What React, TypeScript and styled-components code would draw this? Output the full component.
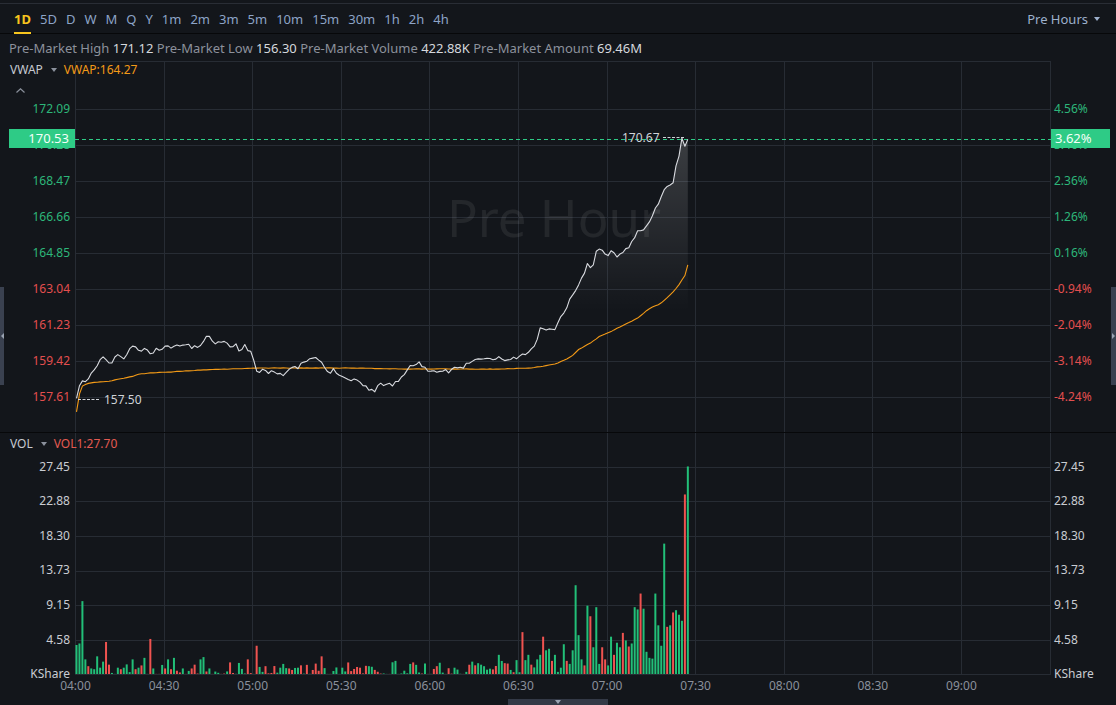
import React from "react";
import styled, { createGlobalStyle } from "styled-components";

const FONT = `"Noto Sans", "Liberation Sans", Arial, sans-serif`;

const colors = {
    bg: "#13161b",
    grid: "#272c34",
    divider: "#07080a",
    green: "#2db67a",
    red: "#e34f4f",
    barGreen: "#22bf78",
    barRed: "#ef5350",
    tag: "#2ecb86",
    tab: "#8da4c7",
    active: "#f7c51e",
    muted: "#8c919b",
    text: "#d5d8dd",
    axis: "#c9ccd2",
    time: "#8a909b",
    orange: "#f39a17",
    line: "#d9dbe0",
};

// chart geometry (page coords)
const X0 = 75;
const PY0 = 61;
const PLOT_W = 976;
const PRICE_H = 371;
const VOL_H = 242;
const SLOT = 88.6;
const PX_PER_MIN = SLOT / 30;
const MINUTES = 208;
const VOL_ZERO = 241.5;
const VOL_SCALE = 7.565;

const GlobalStyle = createGlobalStyle`
    html, body { margin: 0; padding: 0; background: ${colors.bg}; }
    body { font-family: ${FONT}; }
    * { box-sizing: border-box; }
`;

const Page = styled.div`
    position: relative;
    width: 1116px;
    height: 705px;
    overflow: hidden;
    display: flex;
    flex-direction: column;
    background: ${colors.bg};
    font-family: ${FONT};
`;

const Toolbar = styled.div`
    margin-top: 3px;
    height: 31px;
    border-top: 1px solid #292d35;
    border-bottom: 1px solid ${colors.divider};
    display: flex;
    justify-content: space-between;
    align-items: stretch;
    padding: 0 16px 0 14px;
`;

const Tabs = styled.div`
    display: flex;
    gap: 9px;
`;

const Tab = styled.div<{ $active?: boolean }>`
    position: relative;
    display: flex;
    align-items: center;
    font-size: 13px;
    color: ${(p) => (p.$active ? colors.active : colors.tab)};
    font-weight: ${(p) => (p.$active ? 700 : 400)};
    &::after {
        content: "";
        display: ${(p) => (p.$active ? "block" : "none")};
        position: absolute;
        left: 0;
        right: 0;
        bottom: -1px;
        height: 2px;
        background: ${colors.active};
    }
`;

const SessionSelect = styled.div`
    display: flex;
    align-items: center;
    gap: 6px;
    font-size: 13px;
    color: #9db0cc;
`;

const Caret = styled.span<{ $color?: string }>`
    display: inline-block;
    width: 0;
    height: 0;
    border-left: 3px solid transparent;
    border-right: 3px solid transparent;
    border-top: 4px solid ${(p) => p.$color || "#9db0cc"};
`;

const InfoBar = styled.div`
    height: 27px;
    display: flex;
    align-items: center;
    padding-left: 9px;
    font-size: 13px;
    white-space: pre;
`;

const InfoLabel = styled.span`
    color: ${colors.muted};
`;

const InfoValue = styled.span`
    color: ${colors.text};
`;

const Pane = styled.div<{ $height: number; $divider?: boolean }>`
    position: relative;
    height: ${(p) => p.$height}px;
    display: grid;
    grid-template-columns: ${X0}px ${PLOT_W}px 1fr;
    border-bottom: ${(p) => (p.$divider ? `1px solid ${colors.divider}` : "none")};
    flex: none;
`;

const Axis = styled.div<{ $side: "left" | "right"; $top: number }>`
    display: flex;
    flex-direction: column;
    align-items: ${(p) => (p.$side === "left" ? "flex-end" : "flex-start")};
    padding-top: ${(p) => p.$top}px;
    padding-right: ${(p) => (p.$side === "left" ? 5 : 0)}px;
    padding-left: ${(p) => (p.$side === "right" ? 3 : 0)}px;
    font-size: 12px;
`;

const AxisLabel = styled.div<{ $step: number; $tone: "green" | "red" | "plain" }>`
    height: ${(p) => p.$step}px;
    line-height: ${(p) => p.$step}px;
    flex: none;
    white-space: nowrap;
    color: ${(p) => (p.$tone === "green" ? colors.green : p.$tone === "red" ? colors.red : colors.axis)};
`;

const Plot = styled.div`
    position: relative;
    svg {
        display: block;
        overflow: visible;
    }
`;

const Legend = styled.div<{ $top: number }>`
    position: absolute;
    left: 10px;
    top: ${(p) => p.$top}px;
    display: flex;
    align-items: center;
    font-size: 12px;
    line-height: 16px;
`;

const LegendName = styled.span`
    color: #c6cad1;
`;

const LegendCaret = styled(Caret)`
    margin: 0 7px 0 8px;
`;

const LegendValue = styled.span<{ $color: string }>`
    color: ${(p) => p.$color};
`;

const Collapse = styled.div`
    position: absolute;
    left: 16px;
    top: 27px;
    width: 9px;
    height: 5px;
    display: flex;
`;

const PriceTag = styled.div<{ $left: number; $width: number; $align: "left" | "right" }>`
    position: absolute;
    top: 68px;
    left: ${(p) => p.$left}px;
    width: ${(p) => p.$width}px;
    height: 19px;
    line-height: 19px;
    background: ${colors.tag};
    color: #f4fff8;
    font-size: 13px;
    text-align: ${(p) => p.$align};
    padding: 0 6px 0 4px;
`;

const TimeAxis = styled.div`
    height: 24px;
    display: flex;
    padding-left: ${X0 + 0.5 - SLOT / 2}px;
    flex: none;
`;

const TimeLabel = styled.div`
    width: ${SLOT}px;
    flex: none;
    text-align: center;
    line-height: 22px;
    font-size: 12px;
    color: ${colors.time};
`;

const Footer = styled.div`
    height: 6px;
    display: flex;
    justify-content: center;
    flex: none;
`;

const BottomTab = styled.div`
    width: 100px;
    height: 6px;
    background: #333946;
    display: flex;
    justify-content: center;
    padding-top: 1px;
`;

const SideTab = styled.div<{ $side: "left" | "right" }>`
    position: absolute;
    top: 287px;
    ${(p) => (p.$side === "left" ? "left: 0; width: 4px;" : "right: 0; width: 5px;")}
    height: 98px;
    background: #3a4150;
    display: flex;
    align-items: center;
    justify-content: center;
`;

const SideArrow = styled.span<{ $side: "left" | "right" }>`
    width: 0;
    height: 0;
    border-top: 3px solid transparent;
    border-bottom: 3px solid transparent;
    ${(p) => (p.$side === "left" ? "border-right: 3px solid #9aa3b2;" : "border-left: 3px solid #9aa3b2;")}
`;

// --- data ---

function rng(seed: number) {
    let s = seed;
    return () => {
        s = (s * 16807) % 2147483647;
        return (s - 1) / 2147483646;
    };
}

// traced from the session, page coords
const priceAnchors: [number, number][] = [
    [76, 400], [80, 386], [84, 378], [87, 388], [90, 372], [95, 370], [100, 360], [104, 356], [108, 365],
    [112, 362], [118, 355], [125, 358], [130, 350], [135, 345], [140, 352], [145, 348], [150, 355],
    [155, 350], [160, 352], [165, 345], [170, 350], [175, 343], [180, 348], [185, 342], [190, 346],
    [195, 348], [200, 345], [205, 337], [210, 338], [215, 342], [220, 340], [225, 340], [230, 348],
    [235, 345], [240, 350], [245, 345], [250, 352], [255, 362], [258, 375], [262, 368], [268, 372],
    [275, 370], [282, 375], [290, 370], [297, 368], [305, 362], [312, 358], [318, 360], [323, 365],
    [328, 372], [335, 370], [342, 375], [348, 380], [355, 378], [362, 385], [368, 388], [375, 390],
    [380, 385], [385, 383], [392, 385], [398, 380], [405, 374], [412, 365], [418, 362], [425, 368],
    [432, 372], [438, 375], [444, 370], [450, 372], [456, 365], [462, 368], [470, 362], [478, 360],
    [485, 358], [492, 360], [500, 358], [508, 360], [515, 358], [522, 356], [530, 352], [535, 345],
    [540, 328], [545, 330], [550, 328], [555, 330], [560, 318], [565, 312], [570, 298], [575, 292],
    [580, 282], [584, 272], [586, 275], [588, 260], [592, 272], [595, 255], [598, 248], [602, 250],
    [606, 255], [609, 257], [612, 247], [616, 257], [619, 255], [623, 253], [627, 247], [629, 248],
    [632, 240], [635, 237], [638, 230], [642, 232], [647, 225], [652, 217], [656, 207], [658, 205],
    [660, 200], [663, 190], [666, 188], [670, 185], [673, 183], [675, 167], [678, 162], [680, 150],
    [682, 138], [685, 147], [688, 139],
];

const vwapAnchors: [number, number][] = [
    [76, 414], [78, 405], [80, 390], [83, 385], [90, 383], [100, 382], [110, 381], [120, 379], [130, 377],
    [140, 374], [150, 373], [170, 372], [200, 370], [230, 369], [260, 368], [300, 368], [350, 368],
    [400, 369], [450, 369], [500, 369], [530, 368], [545, 366], [555, 364], [565, 360], [572, 356],
    [578, 350], [585, 346], [592, 342], [600, 336], [610, 332], [620, 327], [630, 322], [638, 318],
    [645, 312], [652, 307], [660, 304], [667, 298], [673, 292], [678, 286], [682, 280], [686, 274],
    [688, 264],
];

function interp(anchors: [number, number][], x: number) {
    if (x <= anchors[0][0]) return anchors[0][1];
    for (let i = 1; i < anchors.length; i++) {
        const [x1, y1] = anchors[i];
        if (x <= x1) {
            const [x0, y0] = anchors[i - 1];
            return y0 + ((y1 - y0) * (x - x0)) / (x1 - x0);
        }
    }
    return anchors[anchors.length - 1][1];
}

function minuteX(i: number) {
    return 76.5 + i * PX_PER_MIN;
}

function buildLine(anchors: [number, number][], jitter: (x: number) => number, seed: number) {
    const rnd = rng(seed);
    const pts: [number, number][] = [];
    for (let i = 0; i < MINUTES; i++) {
        const x = minuteX(i);
        let y = interp(anchors, x);
        if (i > 0 && i < MINUTES - 1) y += (rnd() - 0.5) * jitter(x);
        pts.push([x - X0, y - PY0]);
    }
    return pts;
}

const pricePts = buildLine(priceAnchors, (x) => (x < 538 ? 4.5 : 1.6), 11);
const vwapPts = buildLine(vwapAnchors, () => 0.4, 5);

type Bar = { v: number; up: boolean };

// [page x, volume, up]
const spikes: [number, number, boolean][] = [
    [76.5, 3.9, true], [79.5, 4.1, true], [82.4, 9.7, true], [85.4, 2.0, true], [88.3, 1.1, false],
    [91.3, 0.8, true], [94.2, 0.7, true], [97.2, 2.4, true], [100.1, 0.9, true], [103.1, 1.7, true],
    [106, 4.3, false], [109, 1.3, false], [118, 0.9, true], [121, 0.7, false], [124, 0.9, true],
    [133, 2.0, true], [136, 0.7, false], [139, 0.9, true], [142, 1.2, false], [145, 2.2, true],
    [150.3, 4.7, false], [153, 0.8, true], [165, 0.8, false], [168, 2.0, true], [171, 0.7, false],
    [174, 2.2, true], [177, 0.5, false], [183, 0.8, true], [192, 0.8, false], [195, 1.3, false],
    [201, 2.0, true], [204, 2.3, true], [207, 0.4, false], [210, 0.8, true], [230.5, 1.6, false],
    [248, 2.0, false], [257, 3.8, false], [260, 1.0, true], [266, 1.1, false], [281, 0.9, true],
    [284, 1.4, true], [290, 0.8, false], [293, 0.6, false], [299, 0.9, true], [322, 2.4, false],
    [342, 0.9, true], [370, 1.1, true], [395, 1.8, true], [410, 1.4, true], [414, 1.6, false],
    [437, 1.1, false], [455, 0.9, true], [472, 1.7, true], [500, 2.6, true], [504, 1.5, false],
    [516, 1.9, true], [522, 5.6, false], [525, 1.9, true], [528, 2.6, true], [531, 1.3, false],
    [536, 2.0, true], [540, 2.6, true], [543, 5.0, false], [546, 3.2, true], [549, 3.4, true],
    [552, 1.8, false], [555, 2.6, true],
];

// from 06:44 to the last print
const lateBars: [number, boolean][] = [
    [0.9, true], [4.0, true], [1.8, false], [1.4, true], [3.2, true], [11.8, true], [5.2, true], [2.0, true],
    [1.2, false], [9.1, true], [7.7, false], [3.6, true], [8.9, true], [1.4, true], [3.6, false], [2.0, false],
    [1.2, true], [5.0, true], [2.6, false], [4.2, true], [3.6, true], [5.5, false], [4.5, true], [3.7, false],
    [4.1, true], [8.9, true], [8.6, true], [10.7, false], [8.7, true], [3.0, true], [2.2, true], [2.1, true],
    [10.7, true], [6.5, true], [3.8, true], [17.3, true], [6.3, false], [6.5, true], [8.2, false], [8.5, true],
    [7.9, true], [7.1, true], [23.8, false], [27.5, true],
];

function buildBars(): Bar[] {
    const rnd = rng(23);
    const bars: Bar[] = [];
    const lateStart = MINUTES - lateBars.length;
    for (let i = 0; i < lateStart; i++) {
        const r = rnd();
        const v = i < 140 ? 0.05 + Math.pow(r, 3) * 1.6 : 0.3 + Math.pow(r, 2) * 2.2;
        bars.push({ v, up: rnd() < 0.55 });
    }
    spikes.forEach(([x, v, up]) => {
        const i = Math.round((x - 76.5) / PX_PER_MIN);
        if (i >= 0 && i < lateStart) bars[i] = { v, up };
    });
    lateBars.forEach(([v, up]) => bars.push({ v, up }));
    return bars;
}

const bars = buildBars();

const toPath = (pts: [number, number][]) => pts.map(([x, y], i) => `${i ? "L" : "M"}${x.toFixed(1)} ${y.toFixed(1)}`).join(" ");

const verticals = Array.from({ length: 12 }, (_, k) => Math.round(k * SLOT) + 0.5);

const priceLabels = ["172.09", "170.28", "168.47", "166.66", "164.85", "163.04", "161.23", "159.42", "157.61"];
const pctLabels = ["4.56%", "3.46%", "2.36%", "1.26%", "0.16%", "-0.94%", "-2.04%", "-3.14%", "-4.24%"];
const volLevels = [27.45, 22.88, 18.3, 13.73, 9.15, 4.58];
const times = ["04:00", "04:30", "05:00", "05:30", "06:00", "06:30", "07:00", "07:30", "08:00", "08:30", "09:00"];
const tabs = ["1D", "5D", "D", "W", "M", "Q", "Y", "1m", "2m", "3m", "5m", "10m", "15m", "30m", "1h", "2h", "4h"];

const info: [string, string][] = [
    ["Pre-Market High", "171.12"],
    ["Pre-Market Low", "156.30"],
    ["Pre-Market Volume", "422.88K"],
    ["Pre-Market Amount", "69.46M"],
];

function PriceChart() {
    const last = pricePts[pricePts.length - 1];
    const first = pricePts[0];
    const area = `${toPath(pricePts)} L${last[0].toFixed(1)} ${PRICE_H} L${first[0].toFixed(1)} ${PRICE_H} Z`;
    return (
        <svg width={PLOT_W} height={PRICE_H}>
            <defs>
                <linearGradient id="fade" x1="0" y1="76" x2="0" y2="250" gradientUnits="userSpaceOnUse">
                    <stop offset="0" stopColor="#ffffff" stopOpacity="0.17" />
                    <stop offset="1" stopColor="#ffffff" stopOpacity="0" />
                </linearGradient>
            </defs>
            <line x1={0} x2={PLOT_W} y1={0.5} y2={0.5} stroke={colors.grid} />
            {priceLabels.map((_, j) => (
                <line key={j} x1={0} x2={PLOT_W} y1={48.5 + 36 * j} y2={48.5 + 36 * j} stroke={colors.grid} />
            ))}
            {verticals.map((x) => (
                <line key={x} x1={x} x2={x} y1={0} y2={PRICE_H} stroke={colors.grid} />
            ))}
            <text
                x={479}
                y={176}
                textAnchor="middle"
                fontSize={51}
                fontFamily={FONT}
                fill="#ffffff"
                fillOpacity={0.075}
            >
                Pre Hour
            </text>
            <path d={area} fill="url(#fade)" />
            <line x1={0} x2={PLOT_W} y1={78.5} y2={78.5} stroke={colors.tag} strokeDasharray="4 3" />
            <path d={toPath(vwapPts)} fill="none" stroke={colors.orange} strokeWidth={1.1} />
            <path d={toPath(pricePts)} fill="none" stroke={colors.line} strokeWidth={1.1} strokeLinejoin="round" />
            <text x={547} y={80.5} fontSize={12} fontFamily={FONT} fill="#d0d3d8">
                170.67
            </text>
            <line x1={588} x2={609} y1={76.5} y2={76.5} stroke="#d0d3d8" strokeDasharray="3 1.5" />
            <line x1={3} x2={25} y1={338.5} y2={338.5} stroke="#d0d3d8" strokeDasharray="3 1.5" />
            <text x={29} y={342.5} fontSize={12} fontFamily={FONT} fill="#d0d3d8">
                157.50
            </text>
        </svg>
    );
}

function VolumeChart() {
    return (
        <svg width={PLOT_W} height={VOL_H}>
            {volLevels.map((v) => {
                const y = Math.round(VOL_ZERO - v * VOL_SCALE) + 0.5;
                return <line key={v} x1={0} x2={PLOT_W} y1={y} y2={y} stroke={colors.grid} />;
            })}
            {verticals.map((x) => (
                <line key={x} x1={x} x2={x} y1={0} y2={VOL_H} stroke={colors.grid} />
            ))}
            {bars.map((b, i) => {
                const h = Math.max(0.6, b.v * VOL_SCALE);
                return (
                    <rect
                        key={i}
                        x={minuteX(i) - X0 - 1}
                        y={VOL_ZERO - h}
                        width={2}
                        height={h}
                        fill={b.up ? colors.barGreen : colors.barRed}
                    />
                );
            })}
            <line x1={0} x2={PLOT_W} y1={VOL_ZERO} y2={VOL_ZERO} stroke={colors.grid} />
        </svg>
    );
}

export default function App() {
    return (
        <Page>
            <GlobalStyle />
            <Toolbar>
                <Tabs>
                    {tabs.map((t) => (
                        <Tab key={t} $active={t === "1D"}>
                            {t}
                        </Tab>
                    ))}
                </Tabs>
                <SessionSelect>
                    Pre Hours <Caret />
                </SessionSelect>
            </Toolbar>
            <InfoBar>
                {info.map(([label, value], i) => (
                    <React.Fragment key={label}>
                        <InfoLabel>{label} </InfoLabel>
                        <InfoValue>
                            {value}
                            {i < info.length - 1 ? " " : ""}
                        </InfoValue>
                    </React.Fragment>
                ))}
            </InfoBar>

            {/* price pane */}
            <Pane $height={PRICE_H + 1} $divider>
                <Axis $side="left" $top={30}>
                    {priceLabels.map((l, j) => (
                        <AxisLabel key={l} $step={36} $tone={j < 5 ? "green" : "red"}>
                            {l}
                        </AxisLabel>
                    ))}
                </Axis>
                <Plot>
                    <PriceChart />
                </Plot>
                <Axis $side="right" $top={30}>
                    {pctLabels.map((l, j) => (
                        <AxisLabel key={l} $step={36} $tone={j < 5 ? "green" : "red"}>
                            {l}
                        </AxisLabel>
                    ))}
                </Axis>
                <Legend $top={1}>
                    <LegendName>VWAP</LegendName>
                    <LegendCaret $color="#8b919c" />
                    <LegendValue $color={colors.orange}>VWAP:164.27</LegendValue>
                </Legend>
                <Collapse>
                    <svg width="9" height="5" viewBox="0 0 9 5">
                        <polyline points="0.5,4.5 4.5,0.8 8.5,4.5" fill="none" stroke="#8b919c" strokeWidth="1.2" />
                    </svg>
                </Collapse>
                <PriceTag $left={9} $width={66} $align="right">
                    170.53
                </PriceTag>
                <PriceTag $left={X0 + PLOT_W} $width={59} $align="left">
                    3.62%
                </PriceTag>
            </Pane>

            {/* volume pane */}
            <Pane $height={VOL_H}>
                <Axis $side="left" $top={16.7}>
                    {volLevels.map((v) => (
                        <AxisLabel key={v} $step={34.6} $tone="plain">
                            {v.toFixed(2)}
                        </AxisLabel>
                    ))}
                    <AxisLabel $step={34.6} $tone="plain">
                        KShare
                    </AxisLabel>
                </Axis>
                <Plot>
                    <VolumeChart />
                </Plot>
                <Axis $side="right" $top={16.7}>
                    {volLevels.map((v) => (
                        <AxisLabel key={v} $step={34.6} $tone="plain">
                            {v.toFixed(2)}
                        </AxisLabel>
                    ))}
                    <AxisLabel $step={34.6} $tone="plain">
                        KShare
                    </AxisLabel>
                </Axis>
                <Legend $top={3}>
                    <LegendName>VOL</LegendName>
                    <LegendCaret $color="#8b919c" />
                    <LegendValue $color="#e35a52">VOL1:27.70</LegendValue>
                </Legend>
            </Pane>

            <TimeAxis>
                {times.map((t) => (
                    <TimeLabel key={t}>{t}</TimeLabel>
                ))}
            </TimeAxis>
            <Footer>
                <BottomTab>
                    <Caret $color="#9aa3b2" />
                </BottomTab>
            </Footer>

            <SideTab $side="left">
                <SideArrow $side="left" />
            </SideTab>
            <SideTab $side="right">
                <SideArrow $side="right" />
            </SideTab>
        </Page>
    );
}
